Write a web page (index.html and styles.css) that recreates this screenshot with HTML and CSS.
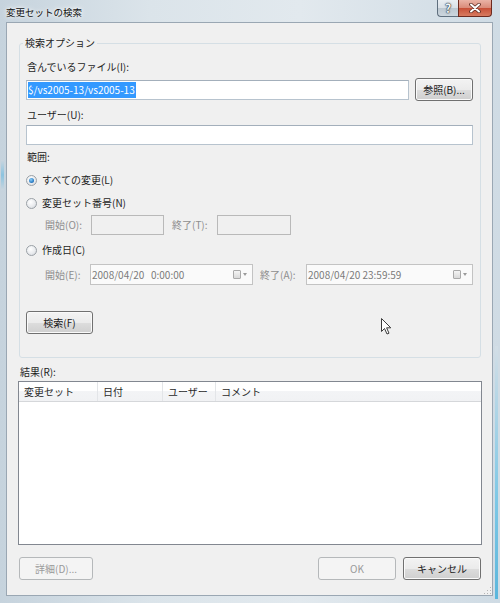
FILE: index.html
```html
<!DOCTYPE html>
<html lang="ja">

<head>
    <meta charset="UTF-8">
    <title>変更セットの検索</title>
    <link rel="stylesheet" href="styles.css">
</head>

<body>
    <div class="window">
        <div class="titlebar">
            <span class="title">変更セットの検索</span>
            <div class="caption">
                <span class="cap help">?</span>
                <span class="cap close">
                    <svg width="14" height="10" viewBox="0 0 14 10">
                        <path d="M3 1.5 L11 8.5 M11 1.5 L3 8.5" stroke="#5a2a22" stroke-width="3.6" stroke-linecap="round" />
                        <path d="M3 1.5 L11 8.5 M11 1.5 L3 8.5" stroke="#ffffff" stroke-width="2" stroke-linecap="round" />
                    </svg>
                </span>
            </div>
        </div>

        <div class="client">
            <div class="group">
                <span class="legend">検索オプション</span>

                <div class="label">含んでいるファイル(I):</div>
                <div class="file-row">
                    <div class="textbox file-box"><span class="sel">$/vs2005-13/vs2005-13</span></div>
                    <span class="btn browse">参照(B)...</span>
                </div>

                <div class="label gap6">ユーザー(U):</div>
                <div class="textbox user-box"></div>

                <div class="label gap4">範囲:</div>

                <div class="radio-row">
                    <span class="radio checked"></span>
                    <span>すべての変更(L)</span>
                </div>
                <div class="radio-row">
                    <span class="radio"></span>
                    <span>変更セット番号(N)</span>
                </div>
                <div class="sub-row num-row">
                    <span class="dim-label w46">開始(O):</span>
                    <span class="textbox disabled w73"></span>
                    <span class="dim-label w45 ml8">終了(T):</span>
                    <span class="textbox disabled w74"></span>
                </div>

                <div class="radio-row">
                    <span class="radio"></span>
                    <span>作成日(C)</span>
                </div>
                <div class="sub-row date-row">
                    <span class="dim-label w45">開始(E):</span>
                    <span class="picker w163">
                        <span class="picker-text">2008/04/20&nbsp;&nbsp;&nbsp;0:00:00</span>
                        <span class="cal"></span>
                        <span class="drop"></span>
                    </span>
                    <span class="dim-label w46 ml7">終了(A):</span>
                    <span class="picker w167">
                        <span class="picker-text">2008/04/20 23:59:59</span>
                        <span class="cal"></span>
                        <span class="drop"></span>
                    </span>
                </div>

                <span class="btn search">検索(F)</span>
            </div>

            <div class="label results-label">結果(R):</div>
            <div class="list">
                <div class="list-head">
                    <span class="col c1">変更セット</span>
                    <span class="col c2">日付</span>
                    <span class="col c3">ユーザー</span>
                    <span class="col c4">コメント</span>
                </div>
            </div>

            <div class="footer">
                <span class="btn disabled details">詳細(D)...</span>
                <span class="spacer"></span>
                <span class="btn disabled ok">OK</span>
                <span class="btn cancel">キャンセル</span>
            </div>

            <span class="grip"></span>
        </div>

        <svg class="cursor" width="12" height="18" viewBox="0 0 12 18">
            <path d="M0.5 0.5 L0.5 13.5 L3.5 10.5 L6 16 L8 15.2 L5.6 9.8 L9.8 9.8 Z" fill="#ffffff" stroke="#3c3c3c" stroke-width="1" stroke-linejoin="round" />
        </svg>
    </div>
</body>

</html>
```

FILE: styles.css
```css
body {
    margin: 0;
    padding: 0;
    font-family: "Noto Sans CJK JP", "Noto Sans", sans-serif;
    font-size: 10px;
    line-height: 16px;
    color: #1e1e1e;
}

.window {
    position: relative;
    width: 500px;
    height: 603px;
    box-sizing: border-box;
    padding: 0 7px 7px 6px;
    display: flex;
    flex-direction: column;
    background:
        linear-gradient(#d3dee6 0%, #7ec8e6 60%, #5ab6dc 100%) right 2px bottom 4px / 3px 42% no-repeat,
        linear-gradient(#c9d5de, #8cc4e0 50%, #c9d5de) left 1px top 160px / 3px 30px no-repeat,
        linear-gradient(to right, #c6d3dd 0%, #dbe4ea 30%, #e2e9ee 60%, #cfdbe4 100%);
    overflow: hidden;
}

.titlebar {
    height: 22px;
    display: flex;
    justify-content: space-between;
    align-items: flex-start;
    flex-shrink: 0;
}

.title {
    padding-top: 4px;
    font-size: 9.5px;
    color: #111;
    text-shadow: 0 0 6px #ffffff, 0 0 3px #ffffff;
}

.caption {
    display: flex;
    margin-right: 1px;
}

.cap {
    height: 17px;
    box-sizing: border-box;
    border: 1px solid #5f6f7e;
    border-top: none;
    display: flex;
    align-items: center;
    justify-content: center;
}

.help {
    width: 21px;
    border-right: none;
    border-bottom-left-radius: 4px;
    background: linear-gradient(#e9eef2 0%, #d9e0e6 50%, #bcc7d0 51%, #ccd6de 100%);
    color: #f4f6f8;
    font-size: 12px;
    font-weight: bold;
    text-shadow: 0 0 1px #2d3a45, 0 0 1px #2d3a45, 0 0 2px #2d3a45;
}

.close {
    width: 34px;
    border-color: #6d2a1f;
    border-bottom-right-radius: 4px;
    background: linear-gradient(#eab3a6 0%, #d98a78 50%, #c74f37 51%, #d77b60 100%);
}

.client {
    position: relative;
    flex: 1;
    border: 1px solid #9aa7b3;
    background-color: #f0f0f0;
    padding: 20px 10px 0 11px;
    display: flex;
    flex-direction: column;
}

/* group box */
.group {
    position: relative;
    margin: 0 1px;
    border: 1px solid #d5dfe5;
    border-radius: 3px;
    padding: 15px 7px 23px 6px;
    display: flex;
    flex-direction: column;
    align-items: flex-start;
}

.legend {
    position: absolute;
    left: 3px;
    top: -9px;
    padding: 0 2px;
    background-color: #f0f0f0;
}

.label {
    padding-left: 1px;
}

.gap6 {
    margin-top: 6px;
}

.gap4 {
    margin-top: 4px;
}

.file-row {
    margin-top: 3px;
    height: 23px;
    width: 100%;
    display: flex;
    align-items: center;
}

.textbox {
    display: block;
    box-sizing: border-box;
    height: 20px;
    border: 1px solid #b7c3ce;
    border-top-color: #a3afbb;
    background-color: #ffffff;
}

.file-box {
    width: 383px;
    padding: 1px 0 0 1px;
}

.sel {
    display: inline-block;
    height: 16px;
    padding-right: 1px;
    background-color: #3399ff;
    color: #ffffff;
}

.user-box {
    margin-top: 2px;
    width: 100%;
}

.radio-row {
    margin-top: 7px;
    height: 16px;
    display: flex;
    align-items: center;
    gap: 5px;
}

.radio {
    width: 11px;
    height: 11px;
    box-sizing: border-box;
    border-radius: 50%;
    border: 1px solid #9aa0a6;
    background: radial-gradient(circle at 40% 35%, #ffffff 0%, #e9ebee 55%, #cfd3d8 100%);
    display: flex;
    align-items: center;
    justify-content: center;
}

.radio.checked::after {
    content: "";
    width: 5px;
    height: 5px;
    border-radius: 50%;
    background: radial-gradient(circle at 40% 35%, #8fd0f8 0%, #2c7fc8 60%, #1b4f8c 100%);
}

.sub-row {
    padding-left: 19px;
    display: flex;
    align-items: center;
}

.num-row {
    margin-top: 4px;
    height: 20px;
}

.date-row {
    margin-top: 6px;
    height: 21px;
}

.dim-label {
    color: #8e8e8e;
}

.disabled.textbox {
    background-color: #f0f0f0;
    border-color: #b9b9b9;
}

.w45 { width: 45px; }
.w46 { width: 46px; }
.w73 { width: 73px; }
.w74 { width: 74px; }
.w163 { width: 163px; }
.w167 { width: 167px; }
.ml7 { margin-left: 7px; }
.ml8 { margin-left: 8px; }

.picker {
    height: 21px;
    box-sizing: border-box;
    border: 1px solid #c3c3c3;
    background-color: #fafafa;
    display: flex;
    align-items: center;
    padding-left: 1px;
    color: #7b7b7b;
}

.picker-text {
    flex: 1;
}

.cal {
    width: 8px;
    height: 9px;
    box-sizing: border-box;
    border: 1px solid #a9a9a9;
    background: linear-gradient(#f4f4f4, #d9d9d9);
    border-radius: 1px;
}

.drop {
    width: 0;
    height: 0;
    margin: 0 5px 0 2px;
    border-left: 2.5px solid transparent;
    border-right: 2.5px solid transparent;
    border-top: 3px solid #9a9a9a;
}

/* buttons */
.btn {
    box-sizing: border-box;
    height: 23px;
    display: flex;
    align-items: center;
    justify-content: center;
    border: 1px solid #707070;
    border-radius: 3px;
    background: linear-gradient(#f3f3f3 0%, #ebebeb 50%, #dddddd 51%, #cfcfcf 100%);
    box-shadow: inset 0 0 0 1px #fafafa;
    color: #1a1a1a;
}

.btn.disabled {
    border-color: #b5b8ba;
    background: #f4f4f4;
    box-shadow: none;
    color: #9a9a9a;
}

.browse {
    width: 58px;
    margin-left: 6px;
}

.search {
    margin-top: 26px;
    width: 67px;
}

/* results */
.results-label {
    margin-top: 6px;
    padding-left: 2px;
}

.list {
    margin-top: 1px;
    height: 164px;
    box-sizing: border-box;
    border: 1px solid #828790;
    background-color: #ffffff;
}

.list-head {
    height: 19px;
    display: flex;
    border-bottom: 1px solid #d5d7da;
    background: linear-gradient(#ffffff 0%, #ffffff 45%, #f3f4f6 46%, #f1f2f4 100%);
}

.col {
    box-sizing: border-box;
    padding-left: 5px;
    border-right: 1px solid #e3e5e8;
    color: #2a2a2a;
    line-height: 19px;
}

.c1 { width: 79px; }
.c2 { width: 65px; }
.c3 { width: 53px; }
.c4 { flex: 1; border-right: none; }

.footer {
    margin-top: 12px;
    display: flex;
    gap: 7px;
}

.details {
    margin-left: 1px;
    width: 74px;
}

.spacer {
    flex: 1;
}

.ok {
    width: 78px;
}

.cancel {
    width: 78px;
    margin-right: 1px;
}

.grip {
    position: absolute;
    right: 1px;
    bottom: 1px;
    width: 8px;
    height: 8px;
    background:
        radial-gradient(circle, #b4b4b4 0.8px, transparent 1px) 0 0 / 3px 3px;
    clip-path: polygon(100% 0, 100% 100%, 0 100%);
}

.cursor {
    position: absolute;
    left: 381px;
    top: 318px;
}
```
